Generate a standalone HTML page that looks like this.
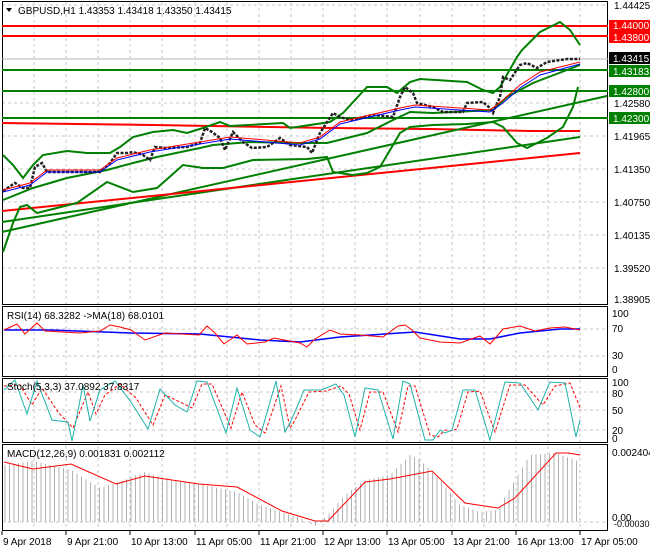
<!DOCTYPE html><html><head><style>
body{margin:0;background:#fff;width:650px;height:550px;overflow:hidden;font-family:"Liberation Sans",sans-serif}
svg{display:block}
text{font-family:"Liberation Sans",sans-serif;font-size:10px;fill:#000}
</style></head><body>
<svg width="650" height="550" viewBox="0 0 650 550">
<defs>
<pattern id="hb" width="4.5" height="10" patternUnits="userSpaceOnUse"><rect x="0" y="0" width="1" height="10" fill="#b0b0b0"/></pattern>
</defs>
<rect width="650" height="550" fill="#fff"/>
<g stroke="#c8c8c8" stroke-dasharray="3,3" stroke-width="1">
<path d="M34 2V530M66 2V530M98 2V530M130 2V530M162 2V530M195 2V530M227 2V530M259 2V530M291 2V530M323 2V530M355 2V530M387 2V530M420 2V530M452 2V530M484 2V530M516 2V530M548 2V530M580 2V530"/>
<path d="M2 5H608M2 103H608M2 136H608M2 169H608M2 202H608M2 235H608M2 268H608M2 329H608M2 356H608M2 392H608M2 410H608M2 430H608M2 522H608"/>
</g>
<g stroke="#000" fill="none" stroke-width="1">
<rect x="2.5" y="1.5" width="605" height="303"/>
<rect x="2.5" y="306.5" width="605" height="70"/>
<rect x="2.5" y="378.5" width="605" height="64"/>
<rect x="2.5" y="444.5" width="605" height="86"/>
</g>
<g stroke-width="2" fill="none">
<path d="M2 26H608M2 36H608" stroke="#ff0000"/>
<path d="M2 59H608" stroke="#b4b4b4" stroke-width="1"/>
<path d="M2 70H608M2 91H608M2 118H608" stroke="#008000"/>
<path d="M2 123L77 124L153 125L330 128L430 129L530 131L580 131" stroke="#ff0000"/>
<path d="M2 232L607 96" stroke="#008000"/>
<path d="M2 222L300 178L580 137" stroke="#008000"/>
<path d="M2 211L580 153" stroke="#ff0000"/>
<path d="M3 155L13 165L23 178L33 165L43 155L67 151L87 153L110 153L120 147L133 137L153 132L173 130L187 133L203 128L220 122L230 126L283 123L290 128L330 122L343 113L367 87L387 87L397 93L410 82L420 79L467 82L483 90L493 93L500 87L517 57L522 50L540 32L560 22L570 30L580 45" stroke="#008000"/>
<path d="M3 252L13 223L20 207L27 205L37 213L77 203L107 182L133 192L157 188L183 165L203 168L223 168L253 160L307 159L327 157L333 172L353 175L367 173L380 167L393 145L400 133L410 127L433 125L467 124L493 122L503 127L517 143L527 148L547 138L563 127L573 107L578 87" stroke="#008000"/>
<path d="M3 200L33 188L67 178L107 170L133 163L157 157L200 148L213 145L250 142L300 143L327 143L367 133L393 120L410 112L433 113L493 110L507 97L533 83L580 65" stroke="#008000"/>
</g>
<path d="M3 191L15 183L23 188L30 188L35 167L42 163L47 172L67 172L87 172L100 172L110 163L117 153L127 153L133 152L143 155L150 160L155 147L167 148L187 147L200 143L205 128L212 132L220 138L225 150L233 132L243 142L252 148L267 147L280 138L290 145L307 147L312 153L320 133L333 113L340 117L350 120L373 115L393 117L400 97L405 87L413 93L417 103L433 107L443 112L463 112L467 103L483 102L490 108L493 113L500 97L503 77L510 80L520 65L527 63L537 68L547 62L567 59L580 59" stroke="#222" fill="none" stroke-width="2.5" stroke-dasharray="3,1.5"/>
<path d="M3 190L30 183L47 170L100 170L117 158L150 150L200 142L230 137L300 143L320 137L340 122L400 108L415 105L490 110L503 100L520 85L540 72L580 62" stroke="#ff0000" fill="none"/>
<path d="M3 192L30 185L47 172L100 172L117 160L150 152L200 144L230 139L300 145L320 139L340 124L400 110L415 107L490 112L503 103L520 88L540 75L580 64" stroke="#0000ff" fill="none"/>
<path d="M6 8L12 8L9 12Z" fill="#000"/>
<text x="18" y="14">GBPUSD,H1  1.43353 1.43418 1.43350 1.43415</text>
<g>
<text x="614" y="9">1.44425</text>
<rect x="609" y="20" width="41" height="11" fill="#ff0000"/><text x="613" y="29" style="fill:#fff">1.44000</text>
<rect x="609" y="31" width="41" height="12" fill="#ff0000"/><text x="613" y="41" style="fill:#fff">1.43800</text>
<rect x="609" y="52" width="41" height="12" fill="#000"/><text x="613" y="62" style="fill:#fff">1.43415</text>
<rect x="609" y="65" width="41" height="12" fill="#008000"/><text x="613" y="75" style="fill:#fff">1.43183</text>
<rect x="609" y="85" width="41" height="12" fill="#008000"/><text x="613" y="95" style="fill:#fff">1.42800</text>
<text x="614" y="107">1.42580</text>
<rect x="609" y="112" width="41" height="12" fill="#008000"/><text x="613" y="122" style="fill:#fff">1.42300</text>
<text x="614" y="140">1.41965</text>
<text x="614" y="173">1.41350</text>
<text x="614" y="206">1.40750</text>
<text x="614" y="239">1.40135</text>
<text x="614" y="272">1.39520</text>
<text x="614" y="303">1.38905</text>
</g>
<text x="7" y="319">RSI(14) 68.3282  -&gt;MA(18) 68.0101</text>
<path d="M4 330L50 330L131 333L200 334L260 340L300 342L340 337L400 333L415 332L460 339L490 339L520 333L560 329L580 329" stroke="#0000ff" fill="none" stroke-width="1.5"/>
<path d="M4 330L17 324L25 334L37 323L45 331L80 333L100 331L110 325L120 327L131 330L145 340L165 333L199 335L207 326L215 333L224 344L237 335L247 344L265 342L274 338L300 343L307 347L315 339L330 330L340 334L360 335L383 337L398 326L405 325L412 330L420 338L440 342L460 343L480 336L490 344L503 329L520 326L535 331L550 328L565 327L580 330" stroke="#ff0000" fill="none"/>
<text x="612" y="317">100</text><text x="612" y="332">70</text><text x="612" y="359">30</text><text x="612" y="373">0</text>
<path d="M4 386L20 385L32 405L42 388L58 412L73 428L88 392L96 414L105 395L120 384L136 398L153 425L165 395L180 402L192 408L202 384L212 384L231 428L242 392L255 425L265 433L281 386L290 428L295 420L305 400L309 392L326 391L341 386L349 394L360 430L370 392L383 392L398 432L408 386L415 386L430 435L438 437L445 430L450 431L457 429L468 392L480 391L495 432L510 385L525 385L543 405L555 386L570 383L581 410" stroke="#ff0000" fill="none" stroke-dasharray="3,2"/>
<path d="M4 390L15 380L27 414L37 381L52 420L68 422L72 441L83 385L90 421L100 390L115 381L131 402L148 429L160 389L175 405L187 412L197 381L207 382L226 433L237 388L250 430L260 437L276 381L285 432L290 423L300 400L304 390L321 390L336 384L344 395L355 437L365 388L378 390L393 439L403 381L410 384L425 440L433 440L440 430L445 433L452 430L463 390L475 390L490 440L505 382L520 383L538 410L550 382L565 383L576 437L580 420" stroke="#20b2aa" fill="none"/>
<text x="7" y="390">Stoch(5,3,3) 37.0892 37.8317</text>
<text x="612" y="386">100</text><text x="612" y="397">80</text><text x="612" y="414">50</text><text x="612" y="434">20</text><text x="612" y="442">0</text>
<path d="M4 522L4 465L33 461L71 470L100 488L116 483L145 472L170 480L199 484L237 492L260 505L300 518L315 526L328 515L345 495L365 480L390 475L410 455L420 460L440 480L460 505L480 512L498 510L510 488L530 455L556 453L575 460L580 462L580 522Z" fill="url(#hb)"/>
<path d="M4 462L33 469L71 464L116 484L145 476L199 484L237 487L282 511L315 521L328 521L365 482L390 479L432 471L465 503L498 508L515 498L556 453L568 453L580 455" stroke="#ff0000" fill="none"/>
<text x="7" y="457">MACD(12,26,9) 0.001831 0.002112</text>
<text x="612" y="456">0.002404</text><text x="612" y="521">0.00</text><text x="614" y="527" style="font-size:9px">-0.000306</text>
<g>
<path d="M2 531V535M66 531V535M130 531V535M195 531V535M259 531V535M323 531V535M387 531V535M452 531V535M516 531V535M580 531V535" stroke="#000"/>
<text x="3" y="545">9 Apr 2018</text>
<text x="67" y="545">9 Apr 21:00</text>
<text x="131" y="545">10 Apr 13:00</text>
<text x="196" y="545">11 Apr 05:00</text>
<text x="260" y="545">11 Apr 21:00</text>
<text x="324" y="545">12 Apr 13:00</text>
<text x="388" y="545">13 Apr 05:00</text>
<text x="453" y="545">13 Apr 21:00</text>
<text x="517" y="545">16 Apr 13:00</text>
<text x="581" y="545">17 Apr 05:00</text>
</g>
</svg>
</body></html>
